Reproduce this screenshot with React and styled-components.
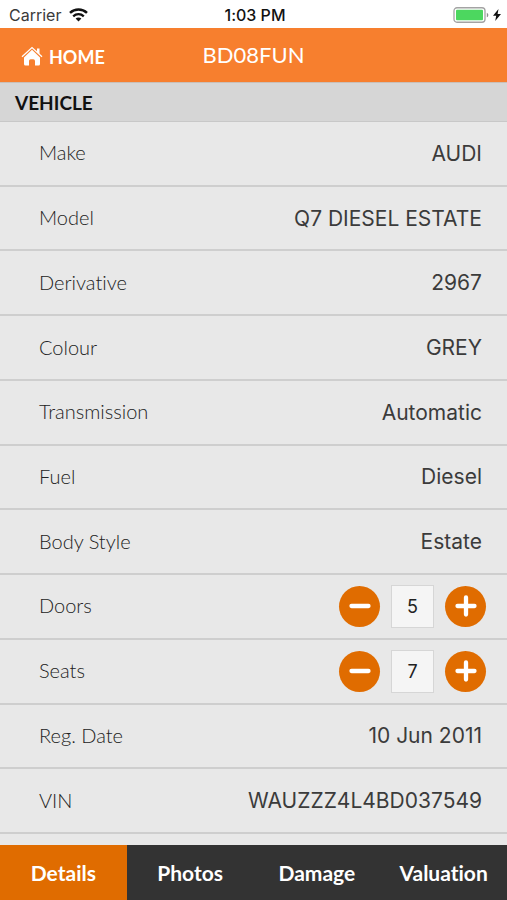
import React, { useState } from "react";
import styled, { createGlobalStyle } from "styled-components";

const humanist = `Lato, "Gill Sans", sans-serif`;
const system = `Inter, "Liberation Sans", sans-serif`;

const GlobalStyle = createGlobalStyle`
  *, *::before, *::after { box-sizing: border-box; }
  body { margin: 0; background: #e8e8e8; font-variant-ligatures: none; }
  button, input { font: inherit; font-variant-ligatures: none; }
`;

const Screen = styled.div`
  display: flex;
  flex-direction: column;
  min-height: 100vh;
  background: #e8e8e8;
  color: #3b3b3b;
  font-family: ${system};
`;

const StatusBar = styled.div`
  display: grid;
  grid-template-columns: 1fr auto 1fr;
  align-items: center;
  height: 28px;
  padding: 2px 6px 0 9px;
  background: #fff;
  color: #111;
  font-size: 16px;
  line-height: 20px;
`;

const Carrier = styled.div`
  display: flex;
  align-items: center;
  gap: 8px;
  color: #3a3a3a;
`;

const Clock = styled.time`
  font-weight: 500;
`;

const Power = styled.div`
  display: flex;
  justify-content: flex-end;
  align-items: center;
  gap: 4px;
`;

const Header = styled.header`
  display: grid;
  grid-template-columns: 1fr auto 1fr;
  align-items: center;
  height: 54px;
  padding: 0 20px;
  background: #f77f2e;
  color: #fff;
  font-family: ${humanist};
`;

const HomeLink = styled.a`
  display: flex;
  align-items: center;
  gap: 5px;
  padding-top: 4px;
  color: inherit;
  font-size: 18px;
  font-weight: 700;
  line-height: 24px;
  text-decoration: none;
`;

const Title = styled.h1`
  margin: 0;
  font-size: 22px;
  font-weight: 400;
  line-height: 28px;
`;

const SectionTitle = styled.h2`
  height: 40px;
  margin: 0;
  padding: 0 15px;
  border-top: 1px solid #c9bfb8;
  border-bottom: 1px solid #c8c8c8;
  background: #d6d6d6;
  color: #111;
  font-family: ${humanist};
  font-size: 19px;
  font-weight: 700;
  line-height: 39px;
`;

const Fields = styled.main`
  display: grid;
  flex: 1;
  grid-auto-rows: minmax(56px, 1fr);
  padding-bottom: 11px;
`;

const Row = styled.div`
  display: flex;
  align-items: center;
  justify-content: space-between;
  gap: 16px;
  padding: 0 ${(p) => (p.$stepper ? 21 : 25)}px 0 39px;
  border-bottom: 2px solid #cecece;
`;

const Label = styled.label`
  padding-bottom: 2px;
  color: #222;
  font-family: ${humanist};
  font-size: 20px;
  font-weight: 300;
  line-height: 28px;
`;

const Value = styled.output`
  padding-top: 1px;
  font-size: 21px;
  line-height: 28px;
  text-align: right;
`;

const Stepper = styled.div`
  display: flex;
  align-items: center;
  gap: 11px;
`;

const StepButton = styled.button`
  display: flex;
  align-items: center;
  justify-content: center;
  width: 41px;
  height: 41px;
  padding: 0;
  border: 0;
  border-radius: 50%;
  background: #e06c00;
  color: #fff;
  cursor: pointer;
`;

const Count = styled.input`
  width: 43px;
  height: 43px;
  padding: 0;
  border: 1px solid #d6d6d6;
  border-radius: 0;
  background: #f5f5f5;
  color: #222;
  font-size: 18px;
  text-align: center;
`;

const TabBar = styled.nav`
  display: grid;
  grid-template-columns: repeat(4, 1fr);
  height: 55px;
  background: #333;
`;

const Tab = styled.button`
  padding: 0;
  border: 0;
  background: ${(p) => (p.$active ? "#e06c00" : "#333")};
  color: #fff;
  font-family: ${humanist};
  font-size: 21px;
  font-weight: 700;
  line-height: 28px;
  cursor: pointer;
`;

const WifiIcon = () => (
  <svg width="19" height="14" viewBox="0 0 19 14" fill="none" stroke="#111" aria-hidden="true">
    <path d="M1 4.8C5.8.3 13.2.3 18 4.8" strokeWidth="2.5" />
    <path d="M4.2 8.3c3-2.8 7.6-2.8 10.6 0" strokeWidth="2.3" />
    <path d="M9.5 13.5 6.6 10.6c1.6-1.5 4.2-1.5 5.8 0Z" fill="#111" stroke="none" />
  </svg>
);

const BatteryIcon = () => (
  <svg width="36" height="16" viewBox="0 0 36 16" aria-hidden="true">
    <rect x="1" y=".75" width="31" height="14.5" rx="3" fill="#fff" stroke="#a3a3a3" strokeWidth="1.3" />
    <rect x="3" y="2.7" width="27" height="10.6" rx="1" fill="#4cd75f" />
    <path d="M33.8 5.7c2 .8 2 3.800 0 4.6Z" fill="#8d8d8d" />
  </svg>
);

const BoltIcon = () => (
  <svg width="8" height="12" viewBox="0 0 8 12" aria-hidden="true">
    <path d="M5.500 0 0 6.700h3.200L2.200 12 8 4.900H4.600Z" fill="#111" />
  </svg>
);

const HomeIcon = () => (
  <svg width="24" height="22" viewBox="0 0 24 22" fill="#fff" aria-hidden="true">
    <path d="M2 10.800 12 1.600l10 9.200" fill="none" stroke="#fff" strokeWidth="1.300" />
    <path d="M4 11.500 12 3.800l8 7.700V18q0 1.500-1.500 1.500H15v-4.500q0-1.700-1.700-1.700h-2.600Q9 13.300 9 15v4.500H5.500Q4 19.500 4 18Z" />
    <path d="M17 2.500h2.500v6L17 6Z" />
  </svg>
);

const SignIcon = ({ plus }) => (
  <svg width="22" height="22" viewBox="0 0 22 22" stroke="currentColor" strokeWidth="4.300" strokeLinecap="round" aria-hidden="true">
    <path d={plus ? "M2.500 11h17M11 2.500v17" : "M2.500 11h17"} />
  </svg>
);

const fields = [
  { id: "make", label: "Make", value: "AUDI" },
  { id: "model", label: "Model", value: "Q7 DIESEL ESTATE" },
  { id: "derivative", label: "Derivative", value: "2967" },
  { id: "colour", label: "Colour", value: "GREY" },
  { id: "transmission", label: "Transmission", value: "Automatic" },
  { id: "fuel", label: "Fuel", value: "Diesel" },
  { id: "body", label: "Body Style", value: "Estate" },
  { id: "doors", label: "Doors", count: 5 },
  { id: "seats", label: "Seats", count: 7 },
  { id: "reg", label: "Reg. Date", value: "10 Jun 2011" },
  { id: "vin", label: "VIN", value: "WAUZZZ4L4BD037549" },
];

const tabs = ["Details", "Photos", "Damage", "Valuation"];

function StepperField({ id, label, initial }) {
  const [count, setCount] = useState(initial);
  return (
    <Stepper>
      <StepButton type="button" aria-label={`Fewer ${label}`} onClick={() => setCount(Math.max(0, count - 1))}>
        <SignIcon />
      </StepButton>
      <Count
        id={id}
        inputMode="numeric"
        value={count}
        onChange={(e) => setCount(Number(e.target.value.replace(/\D/g, "")))}
      />
      <StepButton type="button" aria-label={`More ${label}`} onClick={() => setCount(count + 1)}>
        <SignIcon plus />
      </StepButton>
    </Stepper>
  );
}

export default function App() {
  const [active, setActive] = useState("Details");
  return (
    <Screen>
      <GlobalStyle />
      <StatusBar>
        <Carrier>
          Carrier
          <WifiIcon />
        </Carrier>
        <Clock>1:03 PM</Clock>
        <Power>
          <BatteryIcon />
          <BoltIcon />
        </Power>
      </StatusBar>
      <Header>
        <HomeLink href="#home">
          <HomeIcon />
          HOME
        </HomeLink>
        <Title>BD08FUN</Title>
      </Header>
      <SectionTitle>VEHICLE</SectionTitle>
      <Fields>
        {fields.map((f) => (
          <Row key={f.id} $stepper={f.count !== undefined}>
            <Label htmlFor={f.id}>{f.label}</Label>
            {f.count !== undefined ? (
              <StepperField id={f.id} label={f.label} initial={f.count} />
            ) : (
              <Value id={f.id}>{f.value}</Value>
            )}
          </Row>
        ))}
      </Fields>
      <TabBar>
        {tabs.map((name) => (
          <Tab
            key={name}
            type="button"
            $active={name === active}
            aria-current={name === active ? "page" : undefined}
            onClick={() => setActive(name)}
          >
            {name}
          </Tab>
        ))}
      </TabBar>
    </Screen>
  );
}
